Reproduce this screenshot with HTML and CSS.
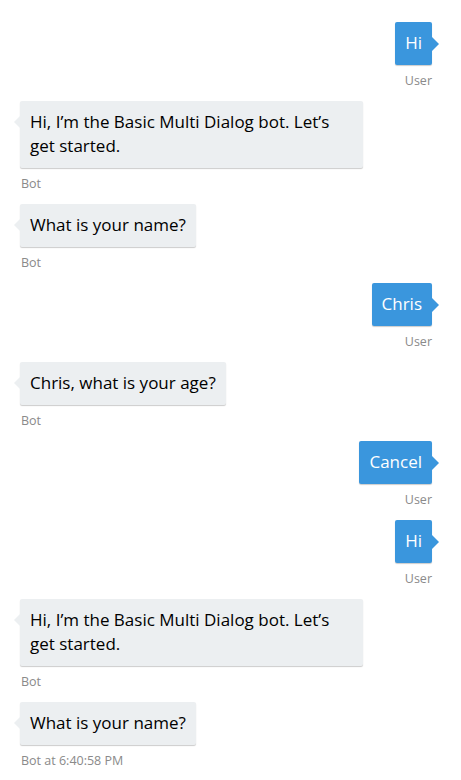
FILE: index.html
```html
<!DOCTYPE html>
<html>
<head>
<meta charset="utf-8">
<link rel="stylesheet" href="styles.css">
</head>
<body>
<div class="chat">
  <div class="msg user">
    <div class="bubble">Hi</div>
    <div class="meta">User</div>
  </div>
  <div class="msg bot">
    <div class="bubble">Hi, I’m the Basic Multi Dialog bot. Let’s get started.</div>
    <div class="meta">Bot</div>
  </div>
  <div class="msg bot">
    <div class="bubble">What is your name?</div>
    <div class="meta">Bot</div>
  </div>
  <div class="msg user">
    <div class="bubble">Chris</div>
    <div class="meta">User</div>
  </div>
  <div class="msg bot">
    <div class="bubble">Chris, what is your age?</div>
    <div class="meta">Bot</div>
  </div>
  <div class="msg user">
    <div class="bubble">Cancel</div>
    <div class="meta">User</div>
  </div>
  <div class="msg user">
    <div class="bubble">Hi</div>
    <div class="meta">User</div>
  </div>
  <div class="msg bot">
    <div class="bubble">Hi, I’m the Basic Multi Dialog bot. Let’s get started.</div>
    <div class="meta">Bot</div>
  </div>
  <div class="msg bot">
    <div class="bubble">What is your name?</div>
    <div class="meta">Bot at 6:40:58 PM</div>
  </div>
</div>
</body>
</html>
```

FILE: styles.css
```css
html, body {
  margin: 0;
  padding: 0;
  background: #ffffff;
}

body {
  font-family: "Open Sans", "Noto Sans", sans-serif;
}

.chat {
  display: flex;
  flex-direction: column;
  padding: 22px 29px 0 20px;
}

.msg {
  display: flex;
  flex-direction: column;
  margin-bottom: 12px;
}

.msg.user {
  align-items: flex-end;
}

.msg.bot {
  align-items: flex-start;
}

.bubble {
  position: relative;
  max-width: 323px;
  padding: 9px 10px 10px;
  font-size: 17px;
  line-height: 24px;
  border-radius: 2px;
  box-shadow: 0 1px 1px 0 rgba(0, 0, 0, 0.2);
}

.bot .bubble {
  background: #eceff1;
  color: #000000;
}

.user .bubble {
  background: #3a96dd;
  color: #ffffff;
}

.bubble::before {
  content: "";
  position: absolute;
  top: 15px;
  width: 0;
  height: 0;
  border-top: 6px solid transparent;
  border-bottom: 6px solid transparent;
}

.bot .bubble::before {
  left: -6px;
  border-right: 6px solid #eceff1;
}

.user .bubble::before {
  right: -7px;
  top: 15px;
  border-top-width: 7px;
  border-bottom-width: 7px;
  border-left: 7px solid #3a96dd;
}

.meta {
  margin-top: 8px;
  font-size: 12.5px;
  line-height: 16px;
  color: #8a8a8a;
}

.bot .meta {
  padding-left: 1px;
}
```
